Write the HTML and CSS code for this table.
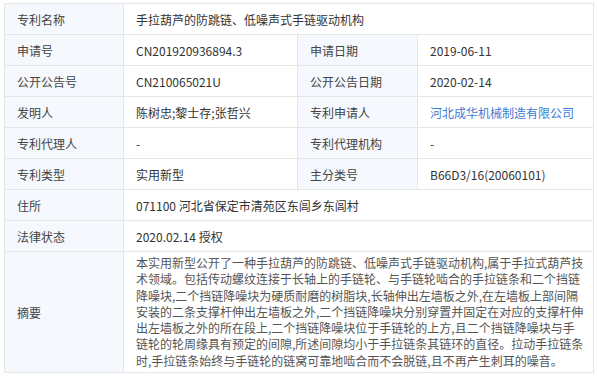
FILE: index.html
```html
<!DOCTYPE html>
<html lang="zh-CN">
<head>
    <meta charset="UTF-8">
    <meta name="viewport" content="width=device-width, initial-scale=1.0">
    <title>专利详情</title>
    <link rel="stylesheet" href="styles.css">
</head>
<body>

    <table class="patent-table">
        <colgroup>
            <col class="col-label">
            <col class="col-value">
            <col class="col-label2">
            <col class="col-value2">
        </colgroup>
        <tr>
            <td class="label">专利名称</td>
            <td colspan="3">手拉葫芦的防跳链、低噪声式手链驱动机构</td>
        </tr>
        <tr>
            <td class="label">申请号</td>
            <td>CN201920936894.3</td>
            <td class="label">申请日期</td>
            <td>2019-06-11</td>
        </tr>
        <tr>
            <td class="label">公开公告号</td>
            <td>CN210065021U</td>
            <td class="label">公开公告日期</td>
            <td>2020-02-14</td>
        </tr>
        <tr>
            <td class="label">发明人</td>
            <td>陈树忠;黎士存;张哲兴</td>
            <td class="label">专利申请人</td>
            <td><a href="#" class="link">河北成华机械制造有限公司</a></td>
        </tr>
        <tr>
            <td class="label">专利代理人</td>
            <td>-</td>
            <td class="label">专利代理机构</td>
            <td>-</td>
        </tr>
        <tr>
            <td class="label">专利类型</td>
            <td>实用新型</td>
            <td class="label">主分类号</td>
            <td>B66D3/16(20060101)</td>
        </tr>
        <tr>
            <td class="label">住所</td>
            <td colspan="3">071100 河北省保定市清苑区东闾乡东闾村</td>
        </tr>
        <tr>
            <td class="label">法律状态</td>
            <td colspan="3">2020.02.14 授权</td>
        </tr>
        <tr>
            <td class="label">摘要</td>
            <td colspan="3" class="abstract">本实用新型公开了一种手拉葫芦的防跳链、低噪声式手链驱动机构,属于手拉式葫芦技<br>术领域。包括传动螺纹连接于长轴上的手链轮、与手链轮啮合的手拉链条和二个挡链<br>降噪块,二个挡链降噪块为硬质耐磨的树脂块,长轴伸出左墙板之外,在左墙板上部间隔<br>安装的二条支撑杆伸出左墙板之外,二个挡链降噪块分别穿置并固定在对应的支撑杆伸<br>出左墙板之外的所在段上,二个挡链降噪块位于手链轮的上方,且二个挡链降噪块与手<br>链轮的轮周缘具有预定的间隙,所述间隙均小于手拉链条其链环的直径。拉动手拉链条<br>时,手拉链条始终与手链轮的链窝可靠地啮合而不会脱链,且不再产生刺耳的噪音。</td>
        </tr>
    </table>

</body>
</html>
```

FILE: styles.css
```css
body {
    margin: 3px 0 0 4px;
    font-family: "Noto Sans CJK SC", "Microsoft YaHei", sans-serif;
    font-size: 12px;
    color: #333;
    background-color: #fff;
}

.patent-table {
    width: 589px;
    border-collapse: collapse;
    table-layout: fixed;
}

.col-label {
    width: 119px;
}

.col-value {
    width: 174px;
}

.col-label2 {
    width: 120px;
}

.col-value2 {
    width: 176px;
}

.patent-table td {
    height: 31px;
    padding: 0 12px;
    border: 1px solid #e6e6e6;
    line-height: 17px;
    vertical-align: middle;
    box-sizing: border-box;
}

.patent-table td.label {
    background-color: #f5f8fd;
    color: #444;
}

.patent-table td.abstract {
    padding: 3px 0 3px 12px;
    line-height: 16.3px;
    white-space: nowrap;
    color: #555;
}

.link {
    color: #3d7ad6;
    text-decoration: none;
}
```
